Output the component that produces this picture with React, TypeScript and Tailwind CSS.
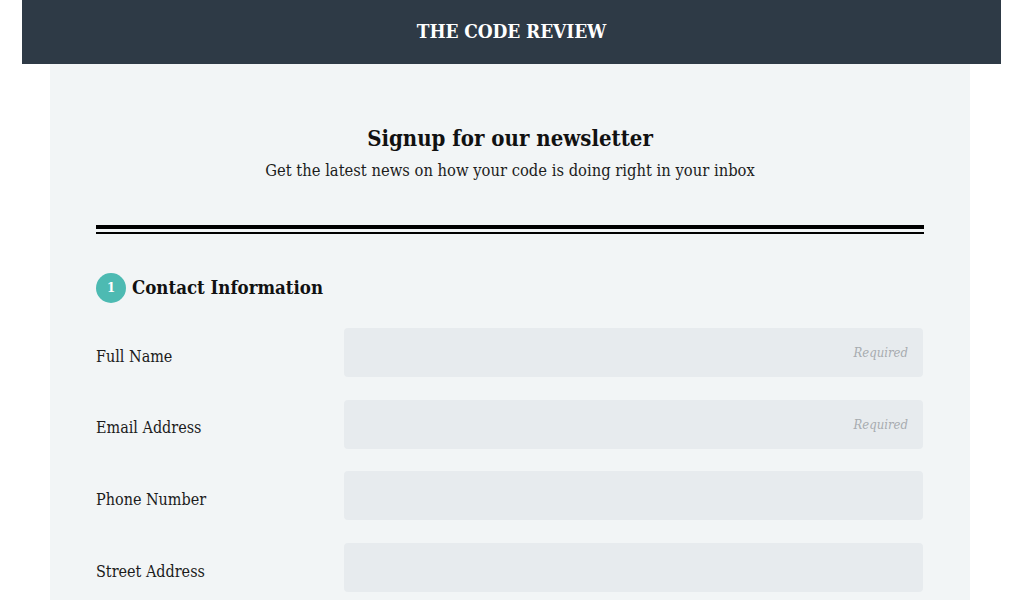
const fields = [
  { label: "Full Name", required: true },
  { label: "Email Address", required: true },
  { label: "Phone Number", required: false },
  { label: "Street Address", required: false },
];

export default function App() {
  return (
    <div
      className="min-h-[600px] bg-white font-stretch-condensed"
      style={{ fontFamily: '"DejaVu Serif Condensed", "DejaVu Serif", "Liberation Serif", serif' }}
    >
      {/* Header */}
      <header className="ml-[22px] w-[979px] h-[64px] bg-[#2e3a46] flex items-center justify-center">
        <h1 className="text-white font-bold text-[19px] leading-[24px] tracking-[-0.1px] -mt-[3px]">THE CODE REVIEW</h1>
      </header>

      {/* Panel */}
      <main className="ml-[50px] w-[920px] bg-[#f2f5f6] px-[46px] pt-[59px] pb-8">
        <div className="text-center">
          <h2 className="text-[22px] font-bold text-[#111] leading-[30px]">Signup for our newsletter</h2>
          <p className="mt-[6px] text-[16.4px] text-[#1c1c1c] leading-[24px]">
            Get the latest news on how your code is doing right in your inbox
          </p>
        </div>

        <div className="mt-[42px]">
          <div className="h-[4px] bg-black" />
          <div className="mt-[3px] h-[2px] bg-black" />
        </div>

        <div className="mt-[39px] flex items-center gap-[6px]">
          <span className="w-[30px] h-[30px] rounded-full bg-[#4dbab2] text-white text-[13px] font-bold flex items-center justify-center">
            1
          </span>
          <h3 className="text-[18.5px] font-bold text-[#111]">Contact Information</h3>
        </div>

        <form className="mt-[25px] flex flex-col gap-[22.7px]">
          {fields.map((f) => (
            <div key={f.label} className="flex items-center">
              <label className="w-[248px] pt-[8px] text-[16px] text-[#1c1c1c]">{f.label}</label>
              <input
                className="w-[579px] h-[49px] rounded-[4px] bg-[#e7ebee] px-[15px] text-right text-[13px] italic placeholder:text-[#a8acb0] outline-none"
                placeholder={f.required ? "Required" : ""}
              />
            </div>
          ))}
        </form>
      </main>
    </div>
  );
}
